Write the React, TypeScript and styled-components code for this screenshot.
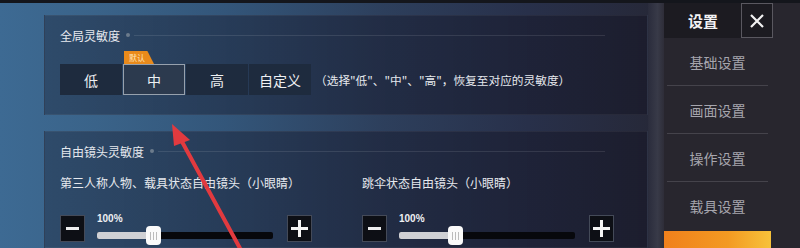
import React from "react";
import styled, { createGlobalStyle } from "styled-components";

const Global = createGlobalStyle`
  html, body { margin: 0; padding: 0; background: #262738; }
  body { font-family: "Noto Sans CJK SC", "Noto Sans", sans-serif; overflow: hidden; }
`;

const Screen = styled.div`
  position: relative;
  width: 800px;
  height: 248px;
  overflow: hidden;
  display: flex;
  flex-direction: column;
  background: linear-gradient(90deg, #3d6a93 0%, #3a6389 12%, #33567a 28%, #2d3f5c 48%, #28304a 66%, #262838 82%);
`;

const TopStrip = styled.div`
  height: 3px;
  flex: none;
  background: #14161c;
`;

const Body = styled.div`
  flex: 1;
  display: flex;
  min-height: 0;
`;

const Main = styled.div`
  width: 604px;
  padding: 12px 0 0 44px;
  display: flex;
  flex-direction: column;
  gap: 16px;
`;

const Gutter = styled.div`
  width: 16px;
  background: linear-gradient(90deg, #2a2c3c 0%, #383a48 60%, #2e2d38 100%);
`;

const Panel = styled.section<{ $h?: number }>`
  height: ${(p) => (p.$h ? `${p.$h}px` : "auto")};
  flex: ${(p) => (p.$h ? "none" : "1")};
  background: linear-gradient(90deg, rgba(30, 40, 62, 0.45) 0%, rgba(24, 28, 48, 0.55) 60%, rgba(22, 22, 38, 0.6) 100%);
  border: 1px solid rgba(255, 255, 255, 0.05);
  padding: 0 0 0 15px;
  box-sizing: border-box;
`;

const TitleRow = styled.div`
  display: flex;
  align-items: center;
  height: 38px;
  padding-right: 42px;
  color: #e6e9ee;
  font-size: 12px;
`;

const Dot = styled.span`
  width: 4px;
  height: 4px;
  border-radius: 50%;
  background: #6c7b8c;
  margin: 0 4px 0 6px;
`;

const Rule = styled.span`
  flex: 1;
  height: 1px;
  background: rgba(255, 255, 255, 0.1);
`;

const Presets = styled.div`
  display: flex;
  align-items: center;
  gap: 1px;
  margin-top: 10px;
  position: relative;
`;

const Preset = styled.div<{ $active?: boolean }>`
  position: relative;
  width: 62px;
  height: 31px;
  box-sizing: border-box;
  display: flex;
  align-items: center;
  justify-content: center;
  font-size: 14px;
  color: #eef0f3;
  background: ${(p) => (p.$active ? "#2c3a4e" : "#1e2b3e")};
  border: 1px solid ${(p) => (p.$active ? "#97a1ad" : "transparent")};
`;

const Tag = styled.span`
  position: absolute;
  top: -14px;
  left: 0;
  width: 30px;
  height: 13px;
  background: #e98a1b;
  clip-path: polygon(0 0, 78% 0, 100% 100%, 0 100%);
  color: #ffe3b8;
  font-size: 8px;
  line-height: 13px;
  padding-left: 5px;
  box-sizing: border-box;
`;

const Hint = styled.span`
  margin-left: 3px;
  font-size: 11.7px;
  color: #e6e9ee;
  white-space: nowrap;
`;

const Columns = styled.div`
  display: grid;
  grid-template-columns: 302px 260px;
`;

const Column = styled.div`
  display: flex;
  flex-direction: column;
`;

const SubTitle = styled.div`
  font-size: 12px;
  color: #e6e9ee;
  height: 20px;
  line-height: 20px;
  margin-top: 3px;
`;

const SliderRow = styled.div`
  display: flex;
  align-items: flex-end;
  margin-top: 20px;
`;

const StepBtn = styled.div`
  width: 25px;
  height: 27px;
  box-sizing: border-box;
  background: #0d0f15;
  border: 1px solid #444a58;
  display: flex;
  align-items: center;
  justify-content: center;
`;

const SliderWrap = styled.div`
  width: 176px;
  margin: 0 14px 0 12px;
  display: flex;
  flex-direction: column;
  padding-bottom: 3px;
`;

const Percent = styled.div`
  font-family: "Liberation Sans", Arial, sans-serif;
  font-size: 10px;
  font-weight: bold;
  color: #eef0f3;
  height: 14px;
`;

const Track = styled.div`
  position: relative;
  height: 7px;
  border-radius: 2px;
  margin-top: 5px;
  background: #07080c;
`;

const Fill = styled.div`
  height: 100%;
  border-radius: 2px 0 0 2px;
  background: #cfd0d4;
`;

const Thumb = styled.div`
  position: absolute;
  top: -6px;
  width: 15px;
  height: 19px;
  border-radius: 4px;
  background: #fafafa;
  margin-left: -7px;
  display: flex;
  align-items: center;
  justify-content: center;
  gap: 2px;
  & > i {
    width: 1px;
    height: 8px;
    background: #bbb;
  }
`;

const Sidebar = styled.aside`
  width: 136px;
  background: #28262e;
  display: flex;
  flex-direction: column;
  margin-top: -3px;
  & > * {
    flex: none;
  }
`;

const Header = styled.div`
  display: flex;
  height: 38px;
  align-items: stretch;
  background: #14161c;
`;

const HeaderTitle = styled.div`
  width: 77px;
  background: #1c1b21;
  color: #f2f2f4;
  font-size: 15px;
  font-weight: bold;
  display: flex;
  align-items: center;
  padding-left: 24px;
  box-sizing: border-box;
  margin-top: 3px;
`;

const CloseBtn = styled.div`
  width: 32px;
  margin-top: 3px;
  box-sizing: border-box;
  border: 1px solid #5a5860;
  background: #1c1b21;
  display: flex;
  align-items: center;
  justify-content: center;
`;

const HeaderFill = styled.div`
  flex: 1;
  margin-top: 3px;
  background: #28262e;
`;

const Menu = styled.nav`
  width: 107px;
  display: flex;
  flex-direction: column;
  & > * {
    flex: none;
  }
`;

const MenuItem = styled.div<{ $divider?: boolean }>`
  height: 48px;
  display: flex;
  align-items: center;
  justify-content: center;
  color: #a6a5ad;
  font-size: 14px;
  margin: 0 3px;
  border-bottom: ${(p) => (p.$divider ? "1px solid #45434b" : "none")};
  box-sizing: border-box;
`;

const ActiveItem = styled.div`
  height: 48px;
  margin-top: 1px;
  display: flex;
  align-items: center;
  justify-content: center;
  color: #fff;
  font-size: 14px;
  background: linear-gradient(90deg, #f0801c 0%, #f39a22 60%, #f7c23a 100%);
`;

const Overlay = styled.svg`
  position: absolute;
  left: 0;
  top: 0;
  pointer-events: none;
`;

const Minus = () => (
  <svg width="15" height="15" viewBox="0 0 15 15">
    <rect x="1" y="6" width="13" height="3" fill="#eee" />
  </svg>
);

const Plus = () => (
  <svg width="17" height="17" viewBox="0 0 17 17">
    <rect x="0" y="7" width="17" height="3" fill="#f4f4f4" />
    <rect x="7" y="0" width="3" height="17" fill="#f4f4f4" />
  </svg>
);

const Slider = ({ value }: { value: number }) => (
  <SliderRow>
    <StepBtn>
      <Minus />
    </StepBtn>
    <SliderWrap>
      <Percent>100%</Percent>
      <Track>
        <Fill style={{ width: `${value}%` }} />
        <Thumb style={{ left: `${value}%` }}>
          <i />
          <i />
          <i />
        </Thumb>
      </Track>
    </SliderWrap>
    <StepBtn>
      <Plus />
    </StepBtn>
  </SliderRow>
);

export default function App() {
  return (
    <>
      <Global />
      <Screen>
        <TopStrip />
        <Body>
          <Main>
            <Panel $h={100}>
              <TitleRow>
                全局灵敏度
                <Dot />
                <Rule />
              </TitleRow>
              <Presets>
                <Preset>低</Preset>
                <Preset $active>
                  <Tag>默认</Tag>中
                </Preset>
                <Preset>高</Preset>
                <Preset>自定义</Preset>
                <Hint>（选择"低"、"中"、"高"，恢复至对应的灵敏度）</Hint>
              </Presets>
            </Panel>
            <Panel>
              <TitleRow>
                自由镜头灵敏度
                <Dot />
                <Rule />
              </TitleRow>
              <Columns>
                <Column>
                  <SubTitle>第三人称人物、载具状态自由镜头（小眼睛）</SubTitle>
                  <Slider value={32} />
                </Column>
                <Column>
                  <SubTitle>跳伞状态自由镜头（小眼睛）</SubTitle>
                  <Slider value={32} />
                </Column>
              </Columns>
            </Panel>
          </Main>
          <Gutter />
          <Sidebar>
            <Header>
              <HeaderTitle>设置</HeaderTitle>
              <CloseBtn>
                <svg width="16" height="16" viewBox="0 0 16 16">
                  <path d="M2 2 L14 14 M14 2 L2 14" stroke="#f2f2f2" strokeWidth="2.2" />
                </svg>
              </CloseBtn>
              <HeaderFill />
            </Header>
            <Menu>
              <MenuItem $divider>基础设置</MenuItem>
              <MenuItem $divider>画面设置</MenuItem>
              <MenuItem $divider>操作设置</MenuItem>
              <MenuItem>载具设置</MenuItem>
              <ActiveItem>灵敏度设置</ActiveItem>
            </Menu>
          </Sidebar>
        </Body>
        <Overlay width="800" height="248" viewBox="0 0 800 248">
          <line x1="242" y1="252" x2="180" y2="138" stroke="#e23a3f" strokeWidth="4" strokeLinecap="round" />
          <polygon points="172,124 190,140 174,146" fill="#e23a3f" />
        </Overlay>
      </Screen>
    </>
  );
}
